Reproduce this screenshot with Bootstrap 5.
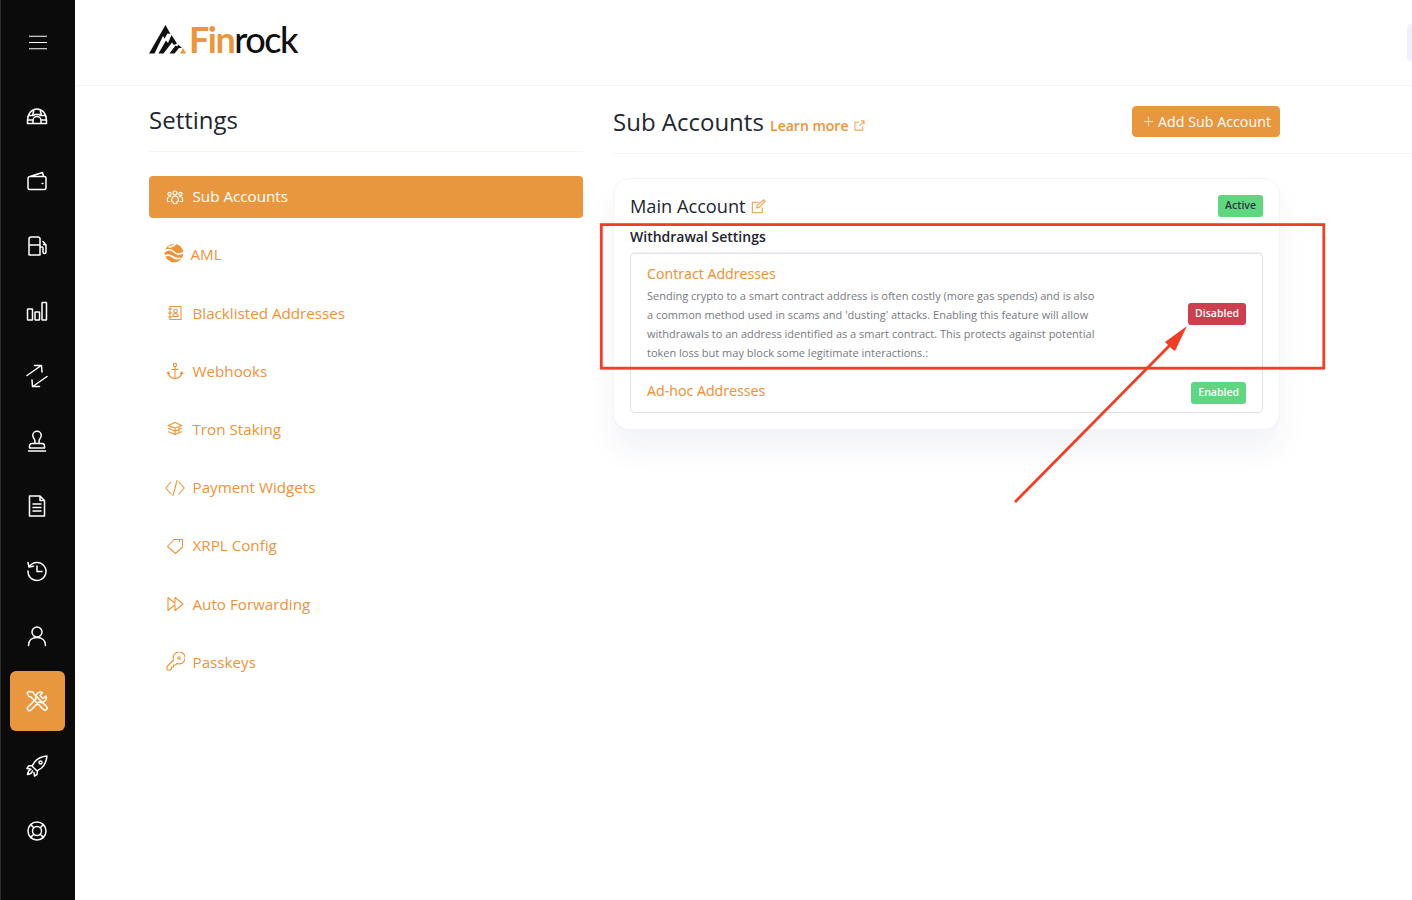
<!DOCTYPE html>
<html lang="en">
<head>
<meta charset="utf-8">
<title>Finrock Settings</title>
<link href="https://cdn.jsdelivr.net/npm/bootstrap@5.3.0/dist/css/bootstrap.min.css" rel="stylesheet">
<style>
:root{--fr-orange:#e9973e;--fr-link:#ee9337;--fr-line:#f3f3fc;}
html,body{height:100%;}
body{font-family:"Open Sans","Liberation Sans",sans-serif;color:#1f2430;background:#fff;overflow:hidden;}
.fr-shell{position:relative;height:900px;width:1412px;overflow:hidden;}
.fr-rail{width:75px;flex:none;background:#0b0b0b;border-left:1px solid #2e2e2e;color:#fff;}
.fr-rail-top{height:86px;padding-right:1px;padding-bottom:2px;}
.fr-rail-list{gap:5px;padding:0 10px 0 9px;}
.fr-rail-item{height:60px;border-radius:6px;color:#fff;padding-right:1px;}
.fr-rail-item.is-on{background:var(--fr-orange);}
.fr-rail svg{width:24px;height:24px;fill:none;stroke:currentColor;stroke-width:1.5;stroke-linecap:round;stroke-linejoin:round;}
.fr-main{min-width:0;}
.fr-top{height:86px;border-bottom:1px solid var(--fr-line);padding-left:74px;position:relative;}
.fr-logo{color:#0f0f0f;font-family:"Lato",sans-serif;font-size:36px;line-height:1;font-weight:500;letter-spacing:-1.5px;padding-bottom:7px;}
.fr-logo b{color:var(--fr-orange);font-weight:700;}
.fr-logo svg{width:37px;height:30px;margin-right:3px;margin-top:1px;}
.fr-blob{position:absolute;right:-4px;top:24px;width:9px;height:37px;background:#eef0fb;border-radius:5px;}
.fr-left{width:434px;margin-left:74px;flex:none;}
.fr-left-head{height:66px;border-bottom:1px solid var(--fr-line);}
.fr-left-head h1{font-size:24px;font-weight:400;margin:0;line-height:67px;color:#22262f;}
.fr-nav{margin-top:24px;gap:16px;}
.fr-nav a{height:42.2px;padding:0 16px 1px;border-radius:4px;color:var(--fr-link);font-size:15.2px;font-weight:500;gap:7.500px;text-decoration:none;}
.fr-nav a.is-on{background:var(--fr-orange);color:#fff;}
.fr-nav svg{width:20px;height:20px;flex:none;fill:none;stroke:currentColor;stroke-width:1.1;stroke-linecap:round;stroke-linejoin:round;}
.fr-nav a.fr-aml{padding-left:15px;gap:6.500px;}
.fr-nav a.fr-aml svg{margin-top:-3px;}
.fr-aml-disc{fill:currentColor;stroke:none;}
.fr-aml-cut{stroke:#fff;stroke-width:1.700;stroke-linecap:butt;}
.fr-right{margin-left:30px;flex:1;min-width:0;}
.fr-right-head{height:68px;border-bottom:1px solid var(--fr-line);padding-right:132px;padding-top:20px;}
.fr-right-head h2{font-size:24px;font-weight:400;margin:0;line-height:31px;color:#22262f;}
.fr-learn{color:var(--fr-link);font-size:14px;font-weight:600;text-decoration:none;}
.fr-learn svg{width:11px;height:11px;margin-left:6px;fill:none;stroke:#ee9337;stroke-width:1.2;opacity:.8;vertical-align:0;}
.btn.fr-add{background:var(--fr-orange);border:1px solid var(--fr-orange);color:#fff;font-size:14.25px;font-weight:500;padding:0 8px 0 10px;height:31px;border-radius:4px;gap:4px;}
.fr-add svg{width:11px;height:11px;stroke:#ffe3c2;stroke-width:1.2;fill:none;}
.card.fr-card{width:667px;margin-top:24px;border:1px solid var(--fr-line);border-radius:16px;box-shadow:0 20px 30px rgba(40,50,110,.06);padding:14px 16px 16px;}
.fr-acct{font-size:18.2px;font-weight:400;margin:0;line-height:26px;color:#22262f;}
.fr-acct svg{width:15px;height:15px;margin-left:1px;fill:none;stroke:#efac65;stroke-width:1.4;vertical-align:-1px;}
.badge.fr-pill{font-size:10.5px;font-weight:600;border-radius:3px;padding:0 7px;height:21.5px;line-height:21.5px;}
.fr-green{background:#5fd680;color:#fff;}
.fr-green.fr-dark{color:#2f3840;}
.fr-red{background:#cc3f4d;color:#fff;}
.badge.fr-drop{margin-top:1px;}
.fr-sub{font-size:14px;font-weight:600;line-height:20px;margin:8px 0 5px;color:#20242c;}
.fr-list{border-radius:4px;}
.fr-list .list-group-item{padding:11px 16px 6px;border-color:#e2e2e5;}
.fr-list .list-group-item + .list-group-item{padding-top:13px;padding-bottom:0;height:44px;}
.fr-item-title{font-size:14.2px;line-height:18px;color:var(--fr-link);font-weight:400;-webkit-text-stroke:.1px var(--fr-link);}
.fr-desc{font-size:11px;line-height:19px;color:#777a80;width:452px;margin:3px 0 0;}
.fr-over{position:absolute;left:0;top:0;width:1412px;height:900px;pointer-events:none;}
</style>
</head>
<body>
<div class="fr-shell d-flex">
  <aside class="fr-rail">
    <div class="fr-rail-top d-flex align-items-center justify-content-center">
      <svg viewBox="0 0 24 24" style="width:18px;height:15px" preserveAspectRatio="none"><path d="M0 2h24M0 12h24M0 22h24"/></svg>
    </div>
    <div class="fr-rail-list d-flex flex-column">
      <a class="fr-rail-item d-flex align-items-center justify-content-center"><svg viewBox="0 0 24 24"><path d="M2.500 19.500v-3C2.500 10 6.500 5 12 5s9.500 5 9.500 11.500v3zM2.500 16h5M16.500 16h5M8 19.500v-3a4 4 0 0 1 8 0v3M3.500 11.500h5.500M15 11.500h5.500M9 5.700 7.500 11.500M15 5.700l1.500 5.800M9.500 10.500h5"/></svg></a>
      <a class="fr-rail-item d-flex align-items-center justify-content-center"><svg viewBox="0 0 24 24"><path d="M5 7.500 17.500 3.500 18.500 7.500M5 7.500h14.500a1.500 1.500 0 0 1 1.500 1.500v10a1.500 1.500 0 0 1-1.500 1.500h-15A1.500 1.500 0 0 1 3 19V9.500a2 2 0 0 1 2-2zM17 14.500h1"/></svg></a>
      <a class="fr-rail-item d-flex align-items-center justify-content-center"><svg viewBox="0 0 24 24"><path d="M4 21V5a2 2 0 0 1 2-2h7a2 2 0 0 1 2 2v16zM4 11h11M15 13h2a1 1 0 0 1 1 1v4a1.500 1.500 0 0 0 3 0v-7l-3-3.500M18.500 10.500l2.500.5"/></svg></a>
      <a class="fr-rail-item d-flex align-items-center justify-content-center"><svg viewBox="0 0 24 24"><rect x="2.500" y="10" width="5" height="11" rx=".5"/><rect x="10" y="13" width="4.500" height="8" rx=".5"/><rect x="17" y="3.500" width="4.500" height="17.500" rx=".5"/></svg></a>
      <a class="fr-rail-item d-flex align-items-center justify-content-center"><svg viewBox="0 0 24 24"><path d="M2 11.500 15.500 2M9.500 1.500h7l.5 6.500M22 12.500 8.500 22M14.500 22.500h-7L7 16"/></svg></a>
      <a class="fr-rail-item d-flex align-items-center justify-content-center"><svg viewBox="0 0 24 24"><path d="M10 14.500V12c0-2-2.200-3-2.200-5.500a4.200 4.200 0 0 1 8.400 0C16.200 9 14 10 14 12v2.500M4.500 19v-2a2.500 2.500 0 0 1 2.500-2.500h10a2.500 2.500 0 0 1 2.500 2.500v2zM3.500 22h17"/></svg></a>
      <a class="fr-rail-item d-flex align-items-center justify-content-center"><svg viewBox="0 0 24 24"><path d="M4.500 2h10.500l4.500 4.500V22H4.500zM15 2v4.500h4.500M8 10h8M8 13.500h8M8 17h8"/></svg></a>
      <a class="fr-rail-item d-flex align-items-center justify-content-center"><svg viewBox="0 0 24 24"><path d="M4.500 7.500A9 9 0 1 1 3 12M3 3.500l1 4.500 4.500-.8M12 7v5.500h5"/></svg></a>
      <a class="fr-rail-item d-flex align-items-center justify-content-center"><svg viewBox="0 0 24 24"><circle cx="12" cy="8" r="5"/><path d="M3.500 21.500c0-5 3.500-8 8.500-8s8.500 3 8.500 8"/></svg></a>
      <a class="fr-rail-item is-on d-flex align-items-center justify-content-center"><svg viewBox="0 0 24 24"><path d="M3.500 2.500 2 4l2 3.500 2 .5 12.500 12.500a2 2 0 0 0 3-3L9 5 8 3zM21 7l-3 2.500-3-3L17.500 3.500A5 5 0 0 0 11 10l-8 8a2 2 0 0 0 3 3l8-8a5 5 0 0 0 7-6z"/></svg></a>
      <a class="fr-rail-item d-flex align-items-center justify-content-center"><svg viewBox="0 0 24 24"><path d="M22 2c-5 .5-9 2-12 5.500L7 12l5 5 4.500-3C20 11 21.500 7 22 2zM7.500 11.500l-4 .5-1.500 2.500 3.500.5M12.500 16.500l-.5 4-2.500 1.500-.5-3.500M6 15.500c-2 .5-3 2-3.500 5 3-.5 4.500-1.500 5-3.500"/><circle cx="15.500" cy="8.500" r="1.500"/></svg></a>
      <a class="fr-rail-item d-flex align-items-center justify-content-center"><svg viewBox="0 0 24 24"><circle cx="12" cy="12" r="9"/><circle cx="12" cy="12" r="4.500"/><path d="M5.600 5.600l3.200 3.200M18.400 5.600l-3.200 3.200M5.600 18.400l3.200-3.200M18.400 18.400l-3.200-3.200"/></svg></a>
    </div>
  </aside>
  <div class="fr-main flex-grow-1 d-flex flex-column">
    <header class="fr-top d-flex align-items-center">
      <div class="fr-logo d-flex align-items-center">
        <svg viewBox="0 0 37 30"><path fill="#0f0f0f" d="M0 28.500 16.500 0 21.500 9 18.500 8.500 15.500 13.500 14 11 5.500 28.500zM9.500 28.500 17 15.500 19 18 22.500 10 28 18.500 25 20 23 17.500 14.500 28.500zM20.500 28.500 26.500 20.500 28.500 21.500 29 19.500 33 23 30 23 25.500 28.500z"/><path fill="#e9973e" d="M31 28.500 34 23 37 28.500z"/></svg>
        <span><b>Fin</b>rock</span>
      </div>
      <span class="fr-blob"></span>
    </header>
    <div class="d-flex flex-grow-1">
      <section class="fr-left">
        <div class="fr-left-head"><h1>Settings</h1></div>
        <nav class="fr-nav d-flex flex-column">
          <a class="is-on d-flex align-items-center" href="#"><svg viewBox="0 0 20 20"><circle cx="10" cy="6" r="2"/><circle cx="4.500" cy="7" r="1.600"/><circle cx="15.500" cy="7" r="1.600"/><path d="M6.500 14c0-3 1.500-5 3.500-5s3.500 2 3.500 5l-1.500.5-.3 2H8.300l-.3-2zM5 14.500H2.500c-.5-2.500.5-5 2-5h1M15 14.500h2.500c.5-2.500-.5-5-2-5h-1"/></svg>Sub Accounts</a>
          <a class="fr-aml d-flex align-items-center" href="#"><svg viewBox="0 0 20 20"><circle class="fr-aml-disc" cx="10" cy="10" r="9.300"/><path class="fr-aml-cut" d="M.5 8.500c4-3 7-2 9.500.5s5.500 3 9.500.5M1 13c3-1.500 5.500-1 8 1s4.500 2.300 7.500 1M12 .5C10 3 7.500 4 4.500 3.800"/></svg>AML</a>
          <a class="d-flex align-items-center" href="#"><svg viewBox="0 0 20 20"><path d="M5 3.500h11v13H5zM3.500 6h3M3.500 10h3M3.500 14h3"/><circle cx="10.500" cy="8" r="1.800"/><path d="M7.800 13.500c0-2 1.200-3 2.700-3s2.700 1 2.700 3z"/></svg>Blacklisted Addresses</a>
          <a class="d-flex align-items-center" href="#"><svg viewBox="0 0 20 20"><circle cx="10" cy="4" r="1.600"/><path d="M10 5.600V17.500M7 8.500h6M3 11c0 4 3.500 6.500 7 6.500s7-2.500 7-6.500M3 11l-1 1.500M3 11l1.500 1.500M17 11l1 1.500M17 11l-1.500 1.500"/></svg>Webhooks</a>
          <a class="d-flex align-items-center" href="#"><svg viewBox="0 0 20 20"><path d="M10 3.500 17 6.500 10 9 3 6.500zM3.500 9.500 10 12l6.500-2.500M3.500 12.800 10 15.500l6.500-2.700M6 8v.5M10 9v6M14 8v5"/></svg>Tron Staking</a>
          <a class="d-flex align-items-center" href="#"><svg viewBox="0 0 20 20"><path d="M6 4 .8 10 6 16M14 4l5.200 6L14 16M12 2.500 8 17.500"/></svg>Payment Widgets</a>
          <a class="d-flex align-items-center" href="#"><svg viewBox="0 0 20 20"><path d="M9 3.500h8.500v7.500l-7 6.500L2.500 10.500zM14.500 3.500v2"/></svg>XRPL Config</a>
          <a class="d-flex align-items-center" href="#"><svg viewBox="0 0 20 20"><path d="M3 3.500v13L10 10.800V16.500L18 10 10 3.500v5.700z"/></svg>Auto Forwarding</a>
          <a class="d-flex align-items-center" href="#"><svg viewBox="0 0 20 20"><path d="M2 18v-3.500l6.500-6.500a6 6 0 1 1 3.500 3.500l-1.500 1.500H8.500V15h-2v2l-1 1z"/><circle cx="14" cy="6" r="1.300"/></svg>Passkeys</a>
        </nav>
      </section>
      <section class="fr-right">
        <div class="fr-right-head d-flex justify-content-between align-items-start">
          <h2>Sub Accounts <a class="fr-learn" href="#">Learn more<svg viewBox="0 0 12 12"><path d="M9.500 7v4H1V2.500h4.500M6 6.500 11 1.500M7.500 1H11v3.500"/></svg></a></h2>
          <button class="btn fr-add d-inline-flex align-items-center" type="button"><svg viewBox="0 0 13 13"><path d="M6.500 1v11M1 6.500h11"/></svg>Add Sub Account</button>
        </div>
        <div class="card fr-card">
          <div class="d-flex justify-content-between align-items-center">
            <h3 class="fr-acct">Main Account <svg viewBox="0 0 16 16"><path d="M12 9v5.500H1.500V3.500H8M6.500 7l-.5 2.500 2.500-.5L15 2.500 13.500 1z"/></svg></h3>
            <span class="badge fr-pill fr-green fr-dark">Active</span>
          </div>
          <div class="fr-sub">Withdrawal Settings</div>
          <div class="list-group fr-list">
            <div class="list-group-item d-flex justify-content-between align-items-center">
              <div>
                <div class="fr-item-title">Contract Addresses</div>
                <p class="fr-desc">Sending crypto to a smart contract address is often costly (more gas spends) and is also a common method used in scams and 'dusting' attacks. Enabling this feature will allow withdrawals to an address identified as a smart contract. This protects against potential token loss but may block some legitimate interactions.:</p>
              </div>
              <span class="badge fr-pill fr-red fr-drop">Disabled</span>
            </div>
            <div class="list-group-item d-flex justify-content-between align-items-start">
              <div class="fr-item-title">Ad-hoc Addresses</div>
              <span class="badge fr-pill fr-green">Enabled</span>
            </div>
          </div>
        </div>
      </section>
    </div>
  </div>
  <svg class="fr-over" viewBox="0 0 1412 900">
    <rect x="601.300" y="224.600" width="722.500" height="143.600" fill="none" stroke="#ee3f27" stroke-width="2.800"/>
    <path d="M1015 502 1174 341" stroke="#ee3f27" stroke-width="2.800" fill="none"/>
    <path d="M1187 326 1165 342 1172 349 1175 351z" fill="#ee3f27"/>
  </svg>
</div>
</body>
</html>
